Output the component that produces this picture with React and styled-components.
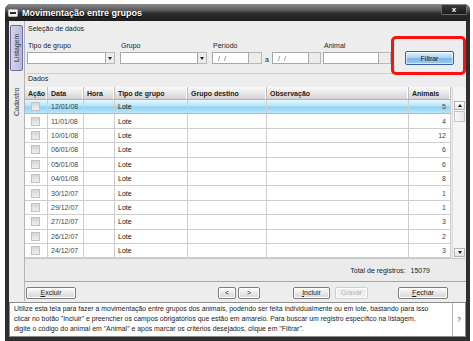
import React from 'react';
import styled, { createGlobalStyle, css } from 'styled-components';

const Global = createGlobalStyle`
  html, body { margin: 0; padding: 0; background: #ffffff; }
  body { font-family: "Liberation Sans", Arial, sans-serif; font-size: 7px; color: #222; }
`;

const Window = styled.div`
  // janela principal
  margin: 4px 0 0 5px;
  width: 465px;
  height: 337px;
  background: #2e2e2e;
  border-radius: 6px 6px 0 0;
  display: flex;
  flex-direction: column;
  box-sizing: border-box;
`;

const TitleBar = styled.div`
  height: 17px;
  display: flex;
  align-items: center;
  padding: 0 3px 0 3px;
  border-radius: 6px 6px 0 0;
  background: linear-gradient(#8c8c8c 0%, #555 40%, #2c2c2c 55%, #1e1e1e 100%);
`;

const Title = styled.div`
  flex: 1;
  margin-left: 4px;
  color: #fff;
  font-size: 9px;
  font-weight: bold;
  text-shadow: 0 1px 1px #000;
`;

const CloseButton = styled.div`
  width: 24px;
  height: 9px;
  margin-top: -6px;
  display: flex;
  align-items: center;
  justify-content: center;
  border: 1px solid #6a6a6a;
  border-top: none;
  border-radius: 0 0 2px 2px;
  background: linear-gradient(#3a3a3a, #1a1a1a);
  color: #fff;
  font-size: 8px;
  font-weight: bold;
`;

const Body = styled.div`
  flex: 1;
  margin: 0 4px 4px 4px;
  background: #ededed;
  display: flex;
  flex-direction: column;
`;

const Top = styled.div`
  height: 280px;
  display: flex;
`;

const Tabs = styled.div`
  width: 16px;
  padding-top: 4px;
  display: flex;
  flex-direction: column;
  align-items: center;
  gap: 3px;
  border-right: 1px solid #b4b4b4;
`;

const Tab = styled.div`
  // aba vertical
  width: 13px;
  height: ${p => p.$h}px;
  box-sizing: border-box;
  display: flex;
  align-items: center;
  justify-content: center;
  writing-mode: vertical-rl;
  transform: rotate(180deg);
  font-size: 7px;
  color: #333;
  border: 1px solid transparent;
  ${p =>
    p.$active &&
    css`
      background: linear-gradient(90deg, #b8b8dc, #d4d4ee);
      border-color: #6f6fa8;
      border-radius: 2px;
    `}
`;

const Main = styled.div`
  flex: 1;
  position: relative;
  display: flex;
  flex-direction: column;
`;

const Section = styled.div`
  padding: 3px 2px 0 2px;
  display: flex;
  flex-direction: column;
`;

const SectionTitle = styled.div`
  height: 10px;
  line-height: 10px;
  padding-left: 1px;
  color: #222;
`;

const FilterRow = styled.div`
  display: flex;
  align-items: flex-end;
  margin-top: 7px;
  height: 23px;
  padding-bottom: 9px;
  border-bottom: 1px solid #cfcfcf;
`;

const Field = styled.div`
  display: flex;
  flex-direction: column;
  margin-left: ${p => p.$ml || 0}px;
`;

const Label = styled.div`
  height: 9px;
  line-height: 9px;
  margin-bottom: 2px;
  padding-left: 1px;
`;

const Controls = styled.div`
  display: flex;
  align-items: center;
`;

const Input = styled.div`
  width: ${p => p.$w}px;
  height: 12px;
  box-sizing: border-box;
  background: #fff;
  border: 1px solid #a8a8a8;
  display: flex;
  align-items: center;
  padding-left: 5px;
  color: #555;
  font-size: 7px;
  letter-spacing: 1px;
`;

const SideBox = styled.div`
  width: ${p => p.$w}px;
  height: 12px;
  box-sizing: border-box;
  border: 1px solid #b8b8b8;
  border-left: none;
  background: #ececec;
  display: flex;
  align-items: center;
  justify-content: center;
`;

const Arrow = styled.span`
  width: 0;
  height: 0;
  border-left: 2.5px solid transparent;
  border-right: 2.5px solid transparent;
  border-${p => (p.$up ? 'bottom' : 'top')}: 3px solid #222;
`;

const Between = styled.span`
  width: 10px;
  text-align: center;
  padding-top: 3px;
`;

const FilterButton = styled.div`
  width: 49px;
  height: 14px;
  margin-left: 14px;
  margin-bottom: -1px;
  box-sizing: border-box;
  border: 1px solid #2f62a8;
  border-radius: 2px;
  background: linear-gradient(#e2f1fd, #a9d2f5 50%, #7db6ea 51%, #9ccaf2);
  box-shadow: inset 0 0 0 1px rgba(255, 255, 255, 0.6);
  display: flex;
  align-items: center;
  justify-content: center;
  color: #1a1a1a;
`;

const Highlight = styled.div`
  // marcação vermelha sobre o botão Filtrar
  position: absolute;
  left: 366px;
  top: 15px;
  width: 75px;
  height: 39px;
  box-sizing: border-box;
  border: 3px solid #ff1010;
  border-radius: 5px;
  pointer-events: none;
`;

const DataTitle = styled.div`
  height: 10px;
  line-height: 10px;
  margin: 0 0 3px 3px;
`;

const Grid = styled.div`
  display: flex;
`;

const Table = styled.div`
  width: 426px;
  background: #fff;
`;

const cols = '23px 36px 31px 73px 79px 142px 42px';

const HeadRow = styled.div`
  display: grid;
  grid-template-columns: ${cols};
  height: 13px;
  background: linear-gradient(#fafafa, #e4e4e4 60%, #d2d2d2);
  border-bottom: 1px solid #b0b0b0;
  box-sizing: border-box;
`;

const HeadCell = styled.div`
  display: flex;
  align-items: center;
  padding-left: 3px;
  font-weight: bold;
  color: #222;
  border-right: 1px solid #bdbdbd;
  box-shadow: inset -1px 0 0 #fff;
`;

const Row = styled.div`
  display: grid;
  grid-template-columns: ${cols};
  height: 14.4px;
  box-sizing: border-box;
  border-bottom: 1px solid #cdcdcd;
  ${p =>
    p.$selected &&
    css`
      background: linear-gradient(#e8f7fe, #b6e4fa 45%, #8fd2f4 55%, #b9e5fa);
      border-bottom-color: #8fc8e6;
    `}
`;

const Cell = styled.div`
  display: flex;
  align-items: center;
  justify-content: ${p => (p.$right ? 'flex-end' : p.$center ? 'center' : 'flex-start')};
  padding: 0 4px 0 3px;
  color: ${p => (p.$dim ? '#444' : '#111')};
  border-right: 1px solid #cdcdcd;
`;

const Check = styled.div`
  width: 9px;
  height: 9px;
  box-sizing: border-box;
  border: 1px solid #c2c2c2;
  background: linear-gradient(#d6d6d6, #eeeeee);
`;

const Scroll = styled.div`
  width: 13px;
  margin-left: 1px;
  display: flex;
  flex-direction: column;
  background: #f4f4f4;
  border-left: 1px solid #dadada;
`;

const ScrollTop = styled.div`
  height: 13px;
`;

const ScrollBtn = styled.div`
  height: 9px;
  margin: 1px 1px;
  box-sizing: border-box;
  border: 1px solid #b4b4b4;
  background: linear-gradient(#fdfdfd, #e2e2e2);
  display: flex;
  align-items: center;
  justify-content: center;
`;

const Thumb = styled.div`
  height: 11px;
  margin: 0 1px;
  box-sizing: border-box;
  border: 1px solid #c4c4c4;
  background: linear-gradient(90deg, #fafafa, #e6e6e6);
`;

const Track = styled.div`
  flex: 1;
`;

const Footer = styled.div`
  height: 25px;
  display: flex;
  align-items: center;
  justify-content: flex-end;
  padding-right: 36px;
  gap: 5px;
  background: #ebebeb;
  border-top: 1px solid #c8c8c8;
  border-bottom: 1px solid #a8a8a8;
  box-sizing: border-box;
  color: #222;
`;

const ButtonRow = styled.div`
  display: flex;
  align-items: center;
  height: 17px;
  padding: 3px 0 0 1px;
`;

const Button = styled.div`
  width: ${p => p.$w}px;
  height: 12px;
  margin-left: ${p => p.$ml || 0}px;
  box-sizing: border-box;
  border: 1px solid #7d7d7d;
  border-radius: 2px;
  background: linear-gradient(#fdfdfd, #e8e8e8 50%, #d6d6d6);
  box-shadow: inset 0 0 0 1px #ffffff;
  display: flex;
  align-items: center;
  justify-content: center;
  color: #1a1a1a;
  u { text-decoration: underline; }
  ${p =>
    p.$disabled &&
    css`
      border-color: #cfcfcf;
      background: #efefef;
      color: #b4b4b4;
    `}
`;

const Help = styled.div`
  height: 35px;
  margin-top: 1px;
  display: flex;
  background: #fff;
  border: 1px solid #8c8c8c;
  box-sizing: border-box;
`;

const HelpText = styled.div`
  flex: 1;
  padding: 1px 0 0 4px;
  line-height: 10px;
  font-size: 6.9px;
  color: #222;
`;

const HelpMark = styled.div`
  width: 12px;
  display: flex;
  align-items: center;
  justify-content: center;
  border-left: 1px solid #b0b0b0;
  color: #333;
`;

const rows = [
  ['12/01/08', 5], ['11/01/08', 4], ['10/01/08', 12], ['06/01/08', 6],
  ['05/01/08', 6], ['04/01/08', 8], ['30/12/07', 1], ['29/12/07', 1],
  ['27/12/07', 3], ['26/12/07', 2], ['24/12/07', 3],
];

function WindowIcon() {
  return (
    <svg width="10" height="8" viewBox="0 0 10 8">
      <rect x="0.5" y="0.5" width="9" height="7" rx="1" fill="#f2f2f2" stroke="#bbb" />
      <rect x="2" y="3" width="6" height="2" fill="#2a2a2a" />
    </svg>
  );
}

export default function App() {
  return (
    <>
      <Global />
      <Window>
        <TitleBar>
          <WindowIcon />
          <Title>Movimentação entre grupos</Title>
          <CloseButton>x</CloseButton>
        </TitleBar>
        <Body>
          <Top>
            <Tabs>
              <Tab $active $h={46}>Listagem</Tab>
              <Tab $h={56}>Cadastro</Tab>
            </Tabs>
            <Main>
              <Section>
                <SectionTitle>Seleção de dados</SectionTitle>
                <FilterRow>
                  <Field>
                    <Label>Tipo de grupo</Label>
                    <Controls>
                      <Input $w={79} />
                      <SideBox $w={9}><Arrow /></SideBox>
                    </Controls>
                  </Field>
                  <Field $ml={5}>
                    <Label>Grupo</Label>
                    <Controls>
                      <Input $w={78} />
                      <SideBox $w={9}><Arrow /></SideBox>
                    </Controls>
                  </Field>
                  <Field $ml={5}>
                    <Label>Período</Label>
                    <Controls>
                      <Input $w={37}>/ /</Input>
                      <SideBox $w={13} />
                      <Between>a</Between>
                      <Input $w={37}>/ /</Input>
                      <SideBox $w={12} />
                    </Controls>
                  </Field>
                  <Field $ml={2}>
                    <Label>Animal</Label>
                    <Controls>
                      <Input $w={56} />
                      <SideBox $w={12} />
                    </Controls>
                  </Field>
                  <FilterButton>Filtrar</FilterButton>
                </FilterRow>
              </Section>
              <Highlight />
              <DataTitle>Dados</DataTitle>
              <Grid>
                <Table>
                  <HeadRow>
                    <HeadCell>Ação</HeadCell>
                    <HeadCell>Data</HeadCell>
                    <HeadCell>Hora</HeadCell>
                    <HeadCell>Tipo de grupo</HeadCell>
                    <HeadCell>Grupo destino</HeadCell>
                    <HeadCell>Observação</HeadCell>
                    <HeadCell>Animais</HeadCell>
                  </HeadRow>
                  {rows.map(([date, n], i) => (
                    <Row key={date} $selected={i === 0}>
                      <Cell $center><Check /></Cell>
                      <Cell $dim>{date}</Cell>
                      <Cell />
                      <Cell>Lote</Cell>
                      <Cell />
                      <Cell />
                      <Cell $right $dim>{n}</Cell>
                    </Row>
                  ))}
                </Table>
                <Scroll>
                  <ScrollTop />
                  <ScrollBtn><Arrow $up /></ScrollBtn>
                  <Thumb />
                  <Track />
                  <ScrollBtn><Arrow /></ScrollBtn>
                </Scroll>
              </Grid>
              <Footer>
                <span>Total de registros:</span>
                <span>15079</span>
              </Footer>
              <ButtonRow>
                <Button $w={50}><span><u>E</u>xcluir</span></Button>
                <Button $w={18} $ml={142}>&lt;</Button>
                <Button $w={22} $ml={2}>&gt;</Button>
                <Button $w={37} $ml={33}><span><u>I</u>ncluir</span></Button>
                <Button $w={33} $ml={5} $disabled>Gravar</Button>
                <Button $w={50} $ml={30}><span><u>F</u>echar</span></Button>
              </ButtonRow>
            </Main>
          </Top>
          <Help>
            <HelpText>
              Utilize esta tela para fazer a movimentação entre grupos dos animais, podendo ser feita individualmente ou em lote, bastando para isso<br />
              clicar no botão "Incluir" e preencher os campos obrigatórios que estão em amarelo. Para buscar um registro específico na listagem,<br />
              digite o código do animal em "Animal" e após marcar os critérios desejados, clique em "Filtrar".
            </HelpText>
            <HelpMark>?</HelpMark>
          </Help>
        </Body>
      </Window>
    </>
  );
}
